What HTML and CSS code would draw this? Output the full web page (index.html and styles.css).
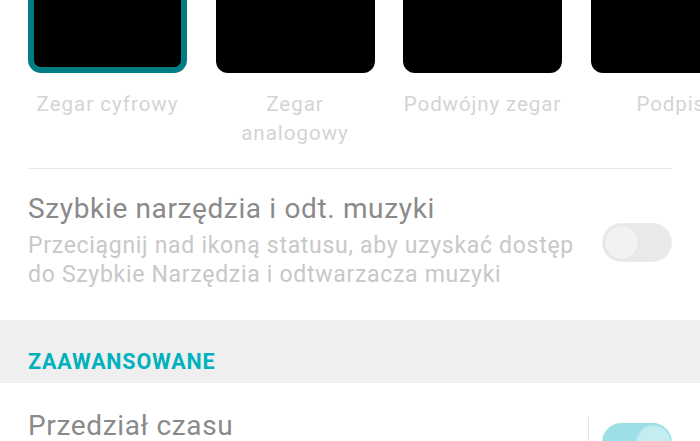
FILE: index.html
```html
<!DOCTYPE html>
<html lang="pl">
<head>
<meta charset="utf-8">
<title>Ustawienia zegara</title>
<link rel="stylesheet" href="styles.css">
</head>
<body>
<div class="screen">
  <section class="clocks">
    <div class="clock-grid">
      <div class="clock">
        <div class="thumb selected"></div>
        <div class="clock-label">Zegar cyfrowy</div>
      </div>
      <div class="clock">
        <div class="thumb"></div>
        <div class="clock-label">Zegar analogowy</div>
      </div>
      <div class="clock">
        <div class="thumb"></div>
        <div class="clock-label nowrap">Podwójny zegar</div>
      </div>
      <div class="clock">
        <div class="thumb"></div>
        <div class="clock-label nowrap edge">Podpis</div>
      </div>
    </div>
    <div class="divider"></div>
  </section>

  <section class="pref-row">
    <div class="pref-text">
      <div class="pref-title">Szybkie narzędzia i odt. muzyki</div>
      <div class="pref-summary">Przeciągnij nad ikoną statusu, aby uzyskać dostęp do Szybkie Narzędzia i odtwarzacza muzyki</div>
    </div>
    <div class="switch off"><span class="knob"></span></div>
  </section>

  <section class="category">
    <div class="category-title">ZAAWANSOWANE</div>
  </section>

  <section class="pref-row last">
    <div class="pref-text">
      <div class="pref-title">Przedział czasu</div>
    </div>
    <div class="widget">
      <span class="vline"></span>
      <div class="switch on"><span class="knob"></span></div>
    </div>
  </section>
</div>
</body>
</html>
```

FILE: styles.css
```css
html, body {
  margin: 0;
  padding: 0;
  background: #ffffff;
  overflow: hidden;
  width: 700px;
  height: 441px;
}

body {
  font-family: Roboto, "Noto Sans", "Liberation Sans", sans-serif;
}

.screen {
  margin-top: -87px;
}

.clocks {
  padding: 0 28px;
}

.clock-grid {
  display: grid;
  grid-template-columns: repeat(4, 159px);
  column-gap: 28.5px;
  width: 720px;
}

.thumb {
  height: 160px;
  background: #000000;
  border-radius: 12px;
  box-sizing: border-box;
}

.thumb.selected {
  border: 6px solid #007c85;
  border-radius: 13px;
}

.clock-label {
  margin-top: 17px;
  text-align: center;
  font-size: 20.5px;
  line-height: 29px;
  letter-spacing: 1px;
  color: #d4d4d4;
}

.clock-label.nowrap {
  white-space: nowrap;
  letter-spacing: 0.9px;
}

.clock-label.edge {
  text-align: left;
  padding-left: 46px;
}

.divider {
  margin-top: 20px;
  height: 1px;
  background: #e9e9e9;
}

.pref-row {
  display: flex;
  align-items: center;
  gap: 24px;
  padding: 23px 28px 31px 28px;
}

.pref-text {
  flex: 1;
  min-width: 0;
}

.pref-title {
  font-size: 28px;
  line-height: 34px;
  letter-spacing: 0.65px;
  color: #8a8a8a;
  margin-bottom: 5px;
}

.pref-summary {
  font-size: 23px;
  line-height: 29px;
  letter-spacing: 0.7px;
  color: #c8c8c8;
}

.switch {
  position: relative;
  flex: none;
  width: 70px;
  height: 39px;
  border-radius: 20px;
  box-sizing: border-box;
}

.switch.off {
  background: #e9e9e9;
  border: 1px solid #ececec;
  margin-top: 4px;
}

.switch.on {
  background: #9ddfe6;
}

.knob {
  position: absolute;
  top: 2px;
  width: 35px;
  height: 35px;
  border-radius: 50%;
  box-sizing: border-box;
}

.switch.off .knob {
  left: 1px;
  top: 1px;
  background: #f2f2f2;
  border: 1px solid #e4e4e4;
}

.switch.on .knob {
  right: 1px;
  background: #c3edf1;
  border: 1px solid #b0e6ec;
}

.category {
  background: #efefef;
  height: 63px;
  box-sizing: border-box;
  padding: 30px 28px 0 28px;
}

.category-title {
  font-size: 21.5px;
  line-height: 24px;
  font-weight: 700;
  letter-spacing: 0.8px;
  color: #00b2bd;
}

.pref-row.last {
  align-items: flex-start;
  padding: 26px 28px 0 28px;
}

.widget {
  display: flex;
  align-items: flex-start;
  gap: 13px;
}

.vline {
  width: 1px;
  height: 40px;
  margin-top: 8px;
  background: #e2e2e2;
}

.widget .switch {
  margin-top: 14px;
}
```
